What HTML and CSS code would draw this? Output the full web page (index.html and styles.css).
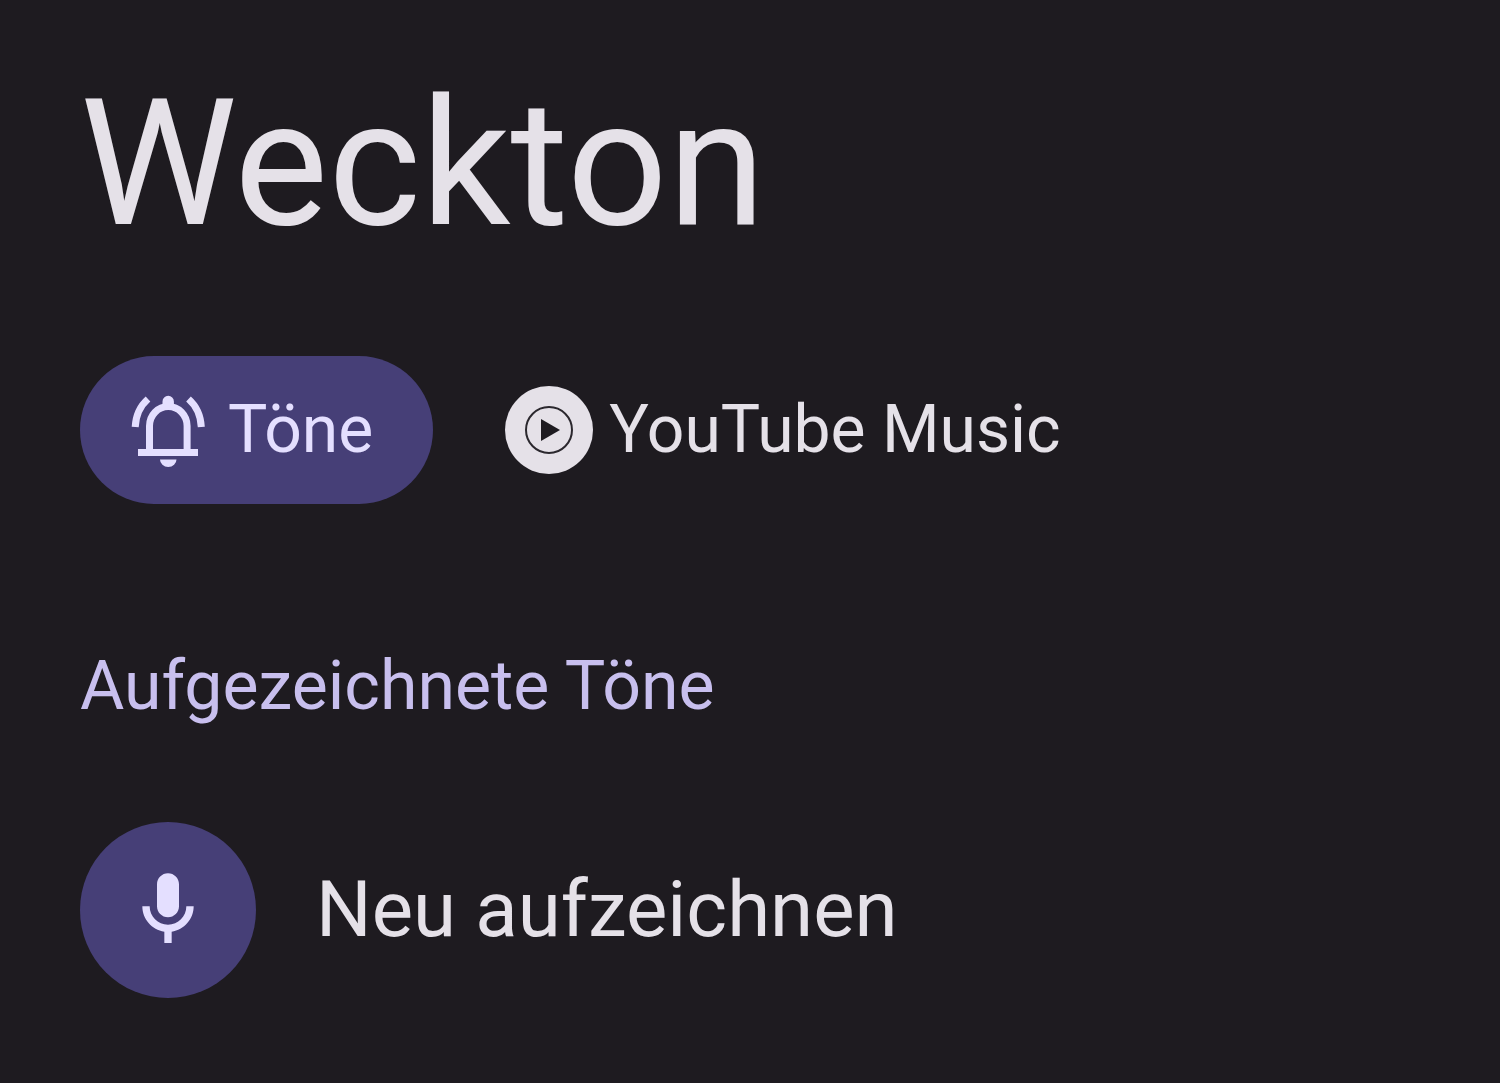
FILE: index.html
```html
<!DOCTYPE html>
<html lang="de">
<head>
<meta charset="utf-8">
<meta name="viewport" content="width=device-width, initial-scale=1">
<title>Weckton</title>
<link rel="stylesheet" href="styles.css">
</head>
<body>
<main class="page">
  <h1 class="title">Weckton</h1>
  <nav class="tabs" aria-label="Quelle">
    <button class="tab tab-active" type="button" aria-pressed="true">
      <svg class="tab-icon" viewBox="0 0 88 88" aria-hidden="true">
        <g fill="none" stroke="currentColor" stroke-width="7">
          <path d="M25.500 66V40a18.800 19.500 0 0 1 37.600 0V66"/>
          <path d="M14 66.500H74"/>
          <path d="M11.200 41C11.800 29 15.500 20.500 24 13M77.300 41C76.700 29 73 20.500 64.500 13"/>
        </g>
        <path fill="currentColor" d="M38.500 21v-5.500a5.700 5.700 0 0 1 11.400 0V21zM36 73.500h16.500a8.200 7.500 0 0 1-16.500 0z"/>
      </svg>
      <span>Töne</span>
    </button>
    <button class="tab" type="button" aria-pressed="false">
      <svg class="tab-icon" viewBox="0 0 88 88" aria-hidden="true"><circle cx="44" cy="44" r="44" fill="#e5e1e8"/><circle cx="44" cy="44" r="23" fill="none" stroke="#2b282e" stroke-width="2"/><path d="M36 33v22l19-11z" fill="#1e1b21"/></svg>
      <span>YouTube Music</span>
    </button>
  </nav>
  <h2 class="section">Aufgezeichnete Töne</h2>
  <button class="record" type="button">
    <span class="record-badge"><svg class="mic" viewBox="0 0 24 24" aria-hidden="true"><path fill="currentColor" d="M12 14c1.660 0 3-1.340 3-3V5c0-1.660-1.340-3-3-3S9 3.340 9 5v6c0 1.660 1.340 3 3 3zm5-3c0 2.760-2.240 5-5 5s-5-2.240-5-5H5c0 3.530 2.610 6.430 6 6.920V21h2v-3.080c3.390-.490 6-3.390 6-6.920h-2z"/></svg></span>
    <span>Neu aufzeichnen</span>
  </button>
</main>
</body>
</html>
```
FILE: styles.css
```css
* { box-sizing: border-box; }
body {
  margin: 0;
  min-height: 100vh;
  background: #1e1b20;
  color: #e5e1e8;
  font-family: Roboto, "Noto Sans", sans-serif;
}
button {
  margin: 0;
  padding: 0;
  border: 0;
  background: none;
  color: inherit;
  font: inherit;
  cursor: pointer;
}
svg { display: block; flex: none; }
.page { padding: 64px 80px; }
.title {
  margin: 0;
  font-size: 177px;
  line-height: 200px;
  font-weight: 400;
}
.tabs { display: flex; gap: 28px; margin-top: 92px; }
.tab {
  display: flex;
  align-items: center;
  height: 148px;
  padding: 0 60px 0 44px;
  gap: 16px;
  border-radius: 74px;
  font-size: 66px;
  line-height: 80px;
  white-space: nowrap;
}
.tab-active {
  background: #463f77;
  color: #e4dfff;
}
.tab-icon { width: 88px; height: 88px; }
.section {
  margin: 136px 0 0;
  color: #c8bfee;
  font-size: 68px;
  line-height: 92px;
  font-weight: 400;
}
.record {
  display: flex;
  align-items: center;
  gap: 60px;
  margin-top: 90px;
  font-size: 78px;
  line-height: 92px;
}
.record-badge {
  display: grid;
  place-items: center;
  width: 176px;
  height: 176px;
  border-radius: 50%;
  background: #463f77;
  color: #e4dfff;
}
.mic { width: 88px; height: 88px; }
```
